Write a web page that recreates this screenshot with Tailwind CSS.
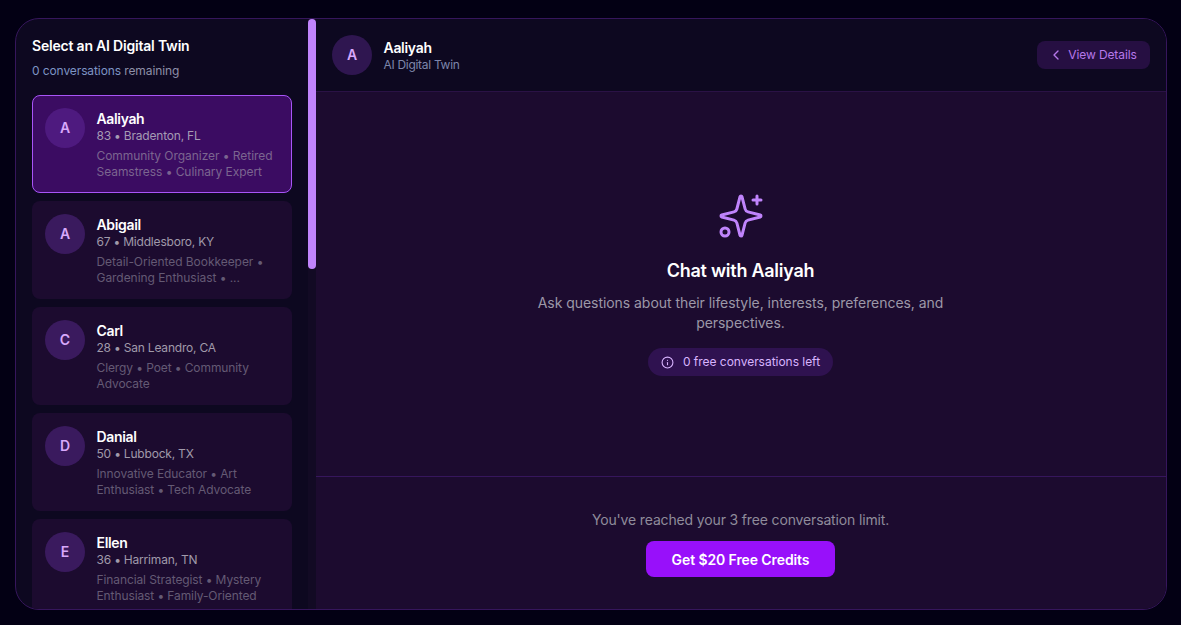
<!doctype html>
<html lang="en">
<head>
<meta charset="utf-8">
<script src="https://cdn.jsdelivr.net/npm/@tailwindcss/browser@4"></script>
</head>
<body class="bg-[#030014] overflow-hidden font-['Inter','Noto_Sans',sans-serif]">
<div class="w-[1181px] h-[625px] pt-[18px] pl-[15px] pr-[14px] pb-[15px]">
  <div class="h-[592px] w-[1152px] rounded-3xl border border-[#36165c] bg-[#0d0820] overflow-hidden flex">
    <aside class="w-[292px] h-full pl-4 pr-4 pt-[17px] overflow-hidden shrink-0">
      <h2 class="text-[14px] leading-[20px] font-semibold text-white tracking-[-0.2px]">Select an AI Digital Twin</h2>
      <p class="mt-[7px] text-[12px] leading-[16px] text-[#8d8fa8] tracking-[-0.1px]"><span class="text-[#7d94c4]">0 conversations</span> remaining</p>
      <div class="mt-4 flex flex-col gap-2">
        <div class="h-[98px] rounded-lg border border-[#a855f7] bg-[#3b0c62] p-3 flex gap-[11.5px]">
          <div class="w-10 h-10 shrink-0 rounded-full bg-[#4e1a7f] flex items-center justify-center text-[#d8a8fb] text-sm font-semibold">A</div>
          <div class="min-w-0 pt-[2px]">
            <div class="text-[14px] leading-[18px] font-semibold text-white tracking-[-0.35px]">Aaliyah</div>
            <div class="text-[12px] leading-[16px] text-[#a59bb4] tracking-[-0.2px]">83 • Bradenton, FL</div>
            <div class="mt-[4px] text-[12px] leading-[16px] text-[#7b6590] tracking-[-0.05px]">Community Organizer • Retired Seamstress • Culinary Expert</div>
          </div>
        </div>
        <div class="h-[98px] rounded-lg bg-[#1c0b2f] p-[13px] flex gap-[11.5px]">
          <div class="w-10 h-10 shrink-0 rounded-full bg-[#3a1a5e] flex items-center justify-center text-[#d8a8fb] text-sm font-semibold">A</div>
          <div class="min-w-0 pt-[2px]">
            <div class="text-[14px] leading-[18px] font-semibold text-white tracking-[-0.35px]">Abigail</div>
            <div class="text-[12px] leading-[16px] text-[#a09aaa] tracking-[-0.2px]">67 • Middlesboro, KY</div>
            <div class="mt-[4px] text-[12px] leading-[16px] text-[#645a74] tracking-[-0.05px]">Detail-Oriented Bookkeeper •<br>Gardening Enthusiast • ...</div>
          </div>
        </div>
        <div class="h-[98px] rounded-lg bg-[#1c0b2f] p-[13px] flex gap-[11.5px]">
          <div class="w-10 h-10 shrink-0 rounded-full bg-[#3a1a5e] flex items-center justify-center text-[#d8a8fb] text-sm font-semibold">C</div>
          <div class="min-w-0 pt-[2px]">
            <div class="text-[14px] leading-[18px] font-semibold text-white tracking-[-0.35px]">Carl</div>
            <div class="text-[12px] leading-[16px] text-[#a09aaa] tracking-[-0.2px]">28 • San Leandro, CA</div>
            <div class="mt-[4px] text-[12px] leading-[16px] text-[#645a74] tracking-[-0.1px]">Clergy • Poet • Community Advocate</div>
          </div>
        </div>
        <div class="h-[98px] rounded-lg bg-[#1c0b2f] p-[13px] flex gap-[11.5px]">
          <div class="w-10 h-10 shrink-0 rounded-full bg-[#3a1a5e] flex items-center justify-center text-[#d8a8fb] text-sm font-semibold">D</div>
          <div class="min-w-0 pt-[2px]">
            <div class="text-[14px] leading-[18px] font-semibold text-white tracking-[-0.35px]">Danial</div>
            <div class="text-[12px] leading-[16px] text-[#a09aaa] tracking-[-0.2px]">50 • Lubbock, TX</div>
            <div class="mt-[4px] text-[12px] leading-[16px] text-[#645a74] tracking-[-0.1px]">Innovative Educator • Art Enthusiast • Tech Advocate</div>
          </div>
        </div>
        <div class="h-[98px] shrink-0 rounded-lg bg-[#1c0b2f] p-[13px] flex gap-[11.5px]">
          <div class="w-10 h-10 shrink-0 rounded-full bg-[#3a1a5e] flex items-center justify-center text-[#d8a8fb] text-sm font-semibold">E</div>
          <div class="min-w-0 pt-[2px]">
            <div class="text-[14px] leading-[18px] font-semibold text-white tracking-[-0.35px]">Ellen</div>
            <div class="text-[12px] leading-[16px] text-[#a09aaa] tracking-[-0.2px]">36 • Harriman, TN</div>
            <div class="mt-[4px] text-[12px] leading-[16px] text-[#645a74] tracking-[-0.1px]">Financial Strategist • Mystery Enthusiast • Family-Oriented</div>
          </div>
        </div>
      </div>
    </aside>
    <div class="w-2 shrink-0 h-full bg-[#120a24]">
      <div class="w-2 h-[250px] rounded-full bg-[#c084fc]"></div>
    </div>
    <main class="flex-1 min-w-0 flex flex-col bg-[#1c0b2f]">
      <header class="h-[73px] shrink-0 bg-[#0d0820] border-b border-[#2a1245] flex items-center justify-between pl-4 pr-4">
        <div class="flex items-center gap-[11.5px]">
          <div class="w-10 h-10 rounded-full bg-[#2f1650] flex items-center justify-center text-[#d8a8fb] text-sm font-semibold">A</div>
          <div>
            <div class="text-[14px] leading-[18px] font-semibold text-white tracking-[-0.3px]">Aaliyah</div>
            <div class="mt-px text-[12px] leading-[14px] text-[#7d86ab] tracking-[-0.3px]">AI Digital Twin</div>
          </div>
        </div>
        <button class="h-7 w-[113px] pr-[2px] rounded-lg bg-[#260f42] flex items-center justify-center gap-[4px] text-[12px] text-[#b678ea] tracking-[-0.1px]">
          <svg class="w-4 h-4" viewBox="0 0 24 24" fill="none" stroke="currentColor" stroke-width="2" stroke-linecap="round" stroke-linejoin="round"><path d="m15 18-6-6 6-6"/></svg>
          View Details
        </button>
      </header>
      <section class="h-[385px] shrink-0 border-b border-[#36165c] flex flex-col items-center pt-[100px] pr-px">
        <svg class="w-12 h-12 text-[#c084fc]" viewBox="0 0 24 24" fill="none" stroke="currentColor" stroke-width="1.5" stroke-linecap="round" stroke-linejoin="round">
          <path d="M9.937 15.5A2 2 0 0 0 8.5 14.063l-6.135-1.582a.5.5 0 0 1 0-.962L8.5 9.936A2 2 0 0 0 9.937 8.5l1.582-6.135a.5.5 0 0 1 .963 0L14.063 8.5A2 2 0 0 0 15.5 9.937l6.135 1.581a.5.5 0 0 1 0 .964L15.5 14.063a2 2 0 0 0-1.437 1.437l-1.582 6.135a.5.5 0 0 1-.963 0z"/>
          <path d="M20 2v4"/><path d="M22 4h-4"/><circle cx="4" cy="20" r="2"/>
        </svg>
        <h1 class="mt-[17px] text-[18px] leading-[28px] font-semibold text-white tracking-[-0.25px]">Chat with Aaliyah</h1>
        <p class="mt-[8px] w-[448px] text-center text-[14px] leading-[20px] text-[#9c98a8] tracking-[-0.05px]">Ask questions about their lifestyle, interests, preferences, and perspectives.</p>
        <div class="mt-[15px] h-7 w-[185px] rounded-full bg-[#2f1250] flex items-center justify-center gap-[9px] text-[12px] text-[#d8b4fe] tracking-[-0.03px]">
          <svg class="w-[13px] h-[13px]" viewBox="0 0 24 24" fill="none" stroke="currentColor" stroke-width="2" stroke-linecap="round" stroke-linejoin="round"><circle cx="12" cy="12" r="10"/><path d="M12 16v-4"/><path d="M12 8h.01"/></svg>
          0 free conversations left
        </div>
      </section>
      <section class="flex-1 flex flex-col items-center pt-[33px] pr-px">
        <p class="text-[14px] leading-[20px] text-[#8f8b9b] tracking-[-0.15px]">You've reached your 3 free conversation limit.</p>
        <button class="mt-[11px] h-9 w-[189px] rounded-lg bg-[#9810fa] text-white text-[14px] font-semibold tracking-[-0.1px]">Get $20 Free Credits</button>
      </section>
    </main>
  </div>
</div>
</body>
</html>
